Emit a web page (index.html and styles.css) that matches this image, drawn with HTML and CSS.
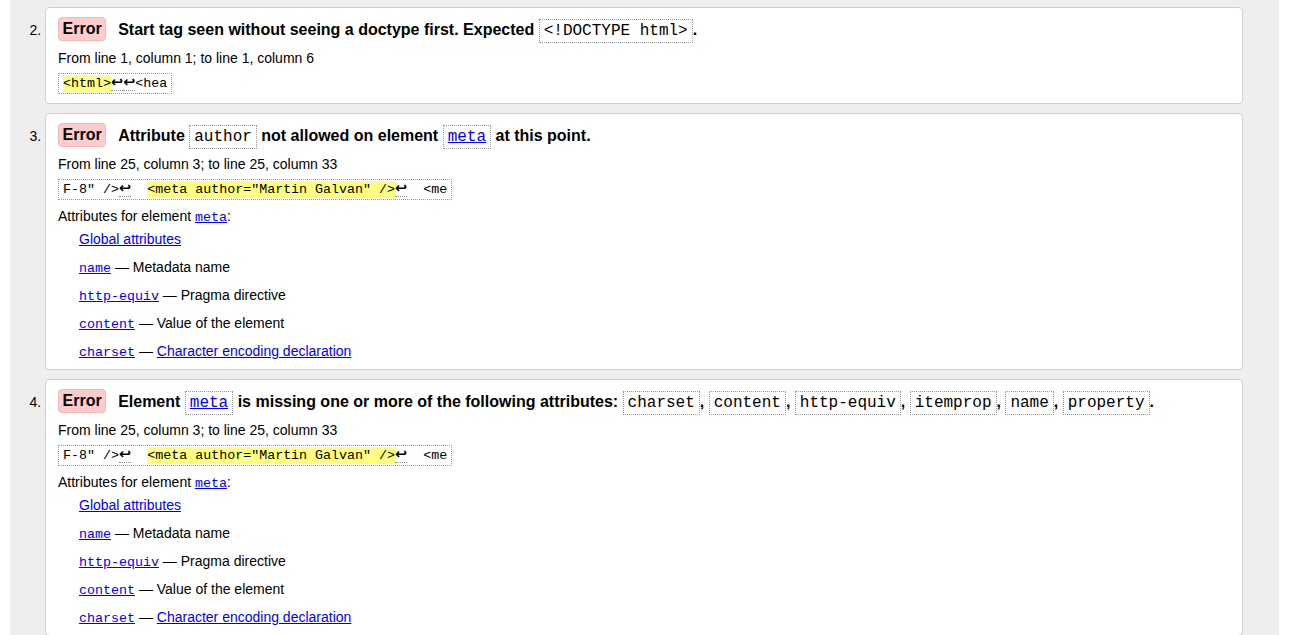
FILE: index.html
```html
<!DOCTYPE html>
<html lang="en">
<head>
<meta charset="utf-8">
<title>Validation messages</title>
<link rel="stylesheet" href="styles.css">
</head>
<body>
<div class="page">
  <ol class="messages" start="2">
    <li class="msg">
      <p class="title"><strong class="badge">Error</strong><span>Start tag seen without seeing a doctype first. Expected <code class="tcode">&lt;!DOCTYPE html&gt;</code>.</span></p>
      <p class="loc">From line 1, column 1; to line 1, column 6</p>
      <p class="extract"><code class="xcode"><b class="hl">&lt;html&gt;</b><span class="lf">↩</span><span class="lf">↩</span>&lt;hea</code></p>
    </li>
    <li class="msg">
      <p class="title"><strong class="badge">Error</strong><span>Attribute <code class="tcode">author</code> not allowed on element <code class="tcode"><a href="#meta">meta</a></code> at this point.</span></p>
      <p class="loc">From line 25, column 3; to line 25, column 33</p>
      <p class="extract"><code class="xcode">F-8" /&gt;<span class="lf">↩</span>  <b class="hl">&lt;meta author="Martin Galvan" /&gt;</b><span class="lf">↩</span>  &lt;me</code></p>
      <p class="attrs-head">Attributes for element <a class="mono" href="#meta">meta</a>:</p>
      <dl class="attrs">
        <dd><a href="#global">Global attributes</a></dd>
        <dd><a class="mono" href="#name">name</a> — Metadata name</dd>
        <dd><a class="mono" href="#http-equiv">http-equiv</a> — Pragma directive</dd>
        <dd><a class="mono" href="#content">content</a> — Value of the element</dd>
        <dd><a class="mono" href="#charset">charset</a> — <a href="#enc">Character encoding declaration</a></dd>
      </dl>
    </li>
    <li class="msg">
      <p class="title"><strong class="badge">Error</strong><span>Element <code class="tcode"><a href="#meta">meta</a></code> is missing one or more of the following attributes: <code class="tcode">charset</code>, <code class="tcode">content</code>, <code class="tcode">http-equiv</code>, <code class="tcode">itemprop</code>, <code class="tcode">name</code>, <code class="tcode">property</code>.</span></p>
      <p class="loc">From line 25, column 3; to line 25, column 33</p>
      <p class="extract"><code class="xcode">F-8" /&gt;<span class="lf">↩</span>  <b class="hl">&lt;meta author="Martin Galvan" /&gt;</b><span class="lf">↩</span>  &lt;me</code></p>
      <p class="attrs-head">Attributes for element <a class="mono" href="#meta">meta</a>:</p>
      <dl class="attrs">
        <dd><a href="#global">Global attributes</a></dd>
        <dd><a class="mono" href="#name">name</a> — Metadata name</dd>
        <dd><a class="mono" href="#http-equiv">http-equiv</a> — Pragma directive</dd>
        <dd><a class="mono" href="#content">content</a> — Value of the element</dd>
        <dd><a class="mono" href="#charset">charset</a> — <a href="#enc">Character encoding declaration</a></dd>
      </dl>
    </li>
  </ol>
</div>
</body>
</html>
```

FILE: styles.css
```css
html, body {
  margin: 0;
  padding: 0;
  background: #fff;
}

body {
  font-family: "Liberation Sans", Arial, sans-serif;
  font-size: 14px;
  color: #000;
  overflow: hidden;
}

.page {
  margin: 0 13px 0 10px;
  background: #eeeeee;
  min-height: 100vh;
  padding: 7px 36px 1px 35px;
}

.messages {
  list-style: decimal outside;
  margin: 0;
  padding: 0;
}

.msg {
  background: #fff;
  border: 1px solid #cfcfcf;
  border-radius: 4px;
  padding: 9px 12px 9px 12px;
  margin: 0 0 9px 0;
}

.title {
  margin: 0;
  font-size: 16px;
  font-weight: bold;
  line-height: 26px;
}

.badge {
  display: inline-block;
  vertical-align: top;
  background: #ffcccc;
  border: 1px solid #f0b8b8;
  border-radius: 4px;
  padding: 0 3.5px;
  line-height: 22px;
  margin-right: 12px;
}

.tcode {
  font-family: "Liberation Mono", "Courier New", monospace;
  font-weight: normal;
  font-size: 16px;
  line-height: 16px;
  border: 1px dotted #999;
  padding: 2px 4px;
}

a {
  color: #0000ee;
  text-decoration: underline;
}

.loc {
  margin: 6px 0 0 0;
  line-height: 18px;
}

.extract {
  margin: 6px 0 0 0;
  line-height: 17px;
}

.xcode {
  display: inline-block;
  font-family: "Liberation Mono", "Courier New", monospace;
  font-size: 13.333px;
  line-height: 17px;
  border: 1px dotted #999;
  padding: 1px 4px;
  white-space: pre;
}

.hl {
  font-weight: normal;
  background: #ffff80;
  padding: 1px 0;
}

.lf {
  font-family: "DejaVu Sans", sans-serif;
  font-weight: bold;
  font-size: 14.5px;
  line-height: 10px;
  border-bottom: 1px dotted #888;
}

.attrs-head {
  margin: 7px 0 0 0;
  line-height: 18px;
}

.mono {
  font-family: "Liberation Mono", "Courier New", monospace;
  font-size: 13.333px;
  line-height: 12px;
}

.attrs {
  margin: 5px 0 0 0;
}

.attrs dd {
  margin: 10px 0 0 21px;
  line-height: 18px;
}

.attrs dd:first-child {
  margin-top: 0;
}
```
